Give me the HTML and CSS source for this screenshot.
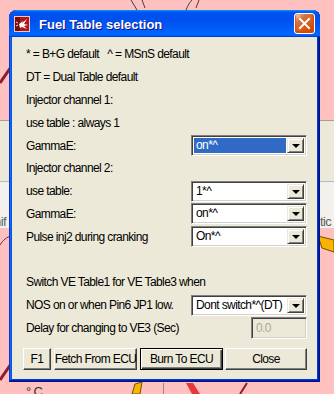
FILE: index.html
```html
<!DOCTYPE html>
<html>
<head>
<meta charset="utf-8">
<link rel="stylesheet" href="styles.css">
</head>
<body>
<div class="desktop">
  <svg class="backdrop" width="334" height="394" viewBox="0 0 334 394">
    <rect x="0" y="0" width="334" height="394" fill="#ffc0c0"/>
    <path d="M131 0 L137 10 M142 0 L145 8 M186 10 C188 5 190 2 192 0 M196 8 L199 0" stroke="#404040" stroke-width="1" fill="none"/>
    <path d="M0 83 L11 67" stroke="#8c1c2c" stroke-width="3" fill="none"/>
    <rect x="0" y="120" width="334" height="62" fill="#ece9d8"/>
    <rect x="0" y="182" width="334" height="46" fill="#f2f1ec"/>
    <line x1="0" y1="120.5" x2="334" y2="120.5" stroke="#a0a0a0"/>
    <line x1="0" y1="181.5" x2="334" y2="181.5" stroke="#b8b8b8"/>
    <text x="-6" y="226" font-family="Liberation Sans" font-size="13" fill="#606060">nif</text>
    <text x="320" y="226" font-family="Liberation Sans" font-size="13" fill="#606060">tic</text>
    <path d="M0 245 C3 240 7 237 11 236" stroke="#8c1c2c" stroke-width="1" fill="none"/>
    <path d="M318 236 L334 240 L334 252 L322 248 Z" fill="#f8b400" stroke="#705000" stroke-width="1"/>
    <path d="M0 380 L11 364" stroke="#8c1c2c" stroke-width="3" fill="none"/>
    <text x="26" y="396" font-family="Liberation Sans" font-size="13" fill="#303030">° C</text>
    <path d="M132 394 L135 384 L142 382 L140 394 Z" fill="#f8b400" stroke="#705000" stroke-width="1"/>
    <line x1="163.5" y1="383" x2="163.5" y2="394" stroke="#909090"/>
    <path d="M186 383 L193 383 L200 394 L192 394 Z" fill="#e83838"/>
    <path d="M247 383 L240 394" stroke="#8c1c2c" stroke-width="2" fill="none"/>
  </svg>

  <div class="window">
    <div class="titlebar">
      <svg class="appicon" width="16" height="16" viewBox="0 0 16 16">
        <rect x="0" y="0" width="16" height="16" fill="#b01818"/>
        <rect x="0" y="0" width="6" height="16" fill="#7a0c0c"/>
        <rect x="0.5" y="0.5" width="15" height="15" fill="none" stroke="#e8c8c8" stroke-width="1"/>
        <path d="M5 8 L9 5 L8 7 L13 3 L10 8 L14 9 L10 10 L13 13 L8 11 L6 12 Z" fill="#ffffff"/>
        <path d="M2 6 L4 7 M2 10 L4 9" stroke="#ffd0d0" stroke-width="1"/>
      </svg>
      <span class="title">Fuel Table selection</span>
      <div class="closebtn">
        <svg width="13" height="13" viewBox="0 0 13 13">
          <path d="M2 2 L11 11 M11 2 L2 11" stroke="#ffffff" stroke-width="2" stroke-linecap="square"/>
        </svg>
      </div>
    </div>
    <div class="body">
      <div class="rows">
        <div class="row"><span class="lbl">* = B+G default   ^ = MSnS default</span></div>
        <div class="row"><span class="lbl">DT = Dual Table default</span></div>
        <div class="row"><span class="lbl">Injector channel 1:</span></div>
        <div class="row"><span class="lbl">use table : always 1</span></div>
        <div class="row"><span class="lbl">GammaE:</span>
          <div class="combo"><span class="val selected">on*^</span><span class="dd"><span class="tri"></span></span></div>
        </div>
        <div class="row"><span class="lbl">Injector channel 2:</span></div>
        <div class="row"><span class="lbl">use table:</span>
          <div class="combo"><span class="val">1*^</span><span class="dd"><span class="tri"></span></span></div>
        </div>
        <div class="row"><span class="lbl">GammaE:</span>
          <div class="combo"><span class="val">on*^</span><span class="dd"><span class="tri"></span></span></div>
        </div>
        <div class="row"><span class="lbl">Pulse inj2 during cranking</span>
          <div class="combo"><span class="val">On*^</span><span class="dd"><span class="tri"></span></span></div>
        </div>
        <div class="row"></div>
        <div class="row"><span class="lbl">Switch VE Table1 for VE Table3 when</span></div>
        <div class="row"><span class="lbl">NOS on or when Pin6 JP1 low.</span>
          <div class="combo"><span class="val">Dont switch*^(DT)</span><span class="dd"><span class="tri"></span></span></div>
        </div>
        <div class="row"><span class="lbl">Delay for changing to VE3 (Sec)</span>
          <div class="field">0.0</div>
        </div>
      </div>
      <div class="buttons">
        <div class="btn b-f1">F1</div>
        <div class="btn b-fetch">Fetch From ECU</div>
        <div class="btn b-burn default">Burn To ECU</div>
        <div class="btn b-close">Close</div>
      </div>
    </div>
  </div>
</div>
</body>
</html>
```

FILE: styles.css
```css
html, body {
  margin: 0;
  padding: 0;
  width: 334px;
  height: 394px;
  overflow: hidden;
}

.desktop {
  position: relative;
  width: 334px;
  height: 394px;
  overflow: hidden;
  font-family: "Liberation Sans", Arial, sans-serif;
  font-size: 12px;
  letter-spacing: -0.6px;
  color: #000;
}

.backdrop {
  position: absolute;
  left: 0;
  top: 0;
  display: block;
}

.window {
  position: absolute;
  left: 9px;
  top: 10px;
  width: 311px;
  height: 372px;
  box-sizing: border-box;
  padding: 0 3px 3px 3px;
  display: flex;
  flex-direction: column;
  background: #0831d9;
  border-radius: 8px 8px 0 0;
  box-shadow: inset -1px -1px #00138c, inset 1px 1px #0831d9, inset -2px -2px #001ea0, inset 2px 2px #166aee, inset -3px -3px #003bda, inset 3px 3px #0855dd;
}

.titlebar {
  height: 27px;
  margin: 0 -3px;
  display: flex;
  align-items: center;
  padding: 0 5px 0 5px;
  border-radius: 8px 7px 0 0;
  background: linear-gradient(180deg, #0997ff, #0053ee 8%, #0050ee 40%, #0066ff 88%, #0066ff 93%, #005bff 95%, #003dd7 96%, #003dd7);
}

.appicon {
  display: block;
  flex: none;
  margin-top: 1px;
}

.title {
  flex: 1;
  margin-left: 9px;
  font-family: "Liberation Sans", Arial, sans-serif;
  font-weight: bold;
  font-size: 13px;
  letter-spacing: 0;
  color: #fff;
  text-shadow: 1px 1px #0f1089;
  padding-top: 2px;
}

.closebtn {
  width: 21px;
  height: 21px;
  box-sizing: border-box;
  border: 1px solid #fff;
  border-radius: 3px;
  background: radial-gradient(circle at 90% 90%, #cc4600 0%, #dc6527 55%, #cd7546 70%, #ffccb2 90%, #fff 100%);
  box-shadow: inset 0 -1px 2px 1px #da4600;
  display: flex;
  align-items: center;
  justify-content: center;
}

.closebtn svg {
  display: block;
}

.body {
  flex: 1;
  background: #ece9d8;
  padding: 6px 10px 0 11px;
  display: flex;
  flex-direction: column;
}

.rows {
  display: grid;
  grid-auto-rows: 22.8px;
}

.row {
  display: grid;
  grid-template-columns: minmax(0, 1fr) auto;
  align-items: center;
}

.lbl {
  padding-left: 3px;
  white-space: pre;
}

.combo {
  width: 116px;
  height: 21px;
  box-sizing: border-box;
  background: #fff;
  border: 1px solid;
  border-color: #808080 #fff #fff #808080;
  box-shadow: inset 1px 1px #404040, inset -1px -1px #d4d0c8;
  padding: 2px;
  display: flex;
}

.val {
  flex: 1;
  padding-left: 2px;
  line-height: 15px;
  white-space: nowrap;
  overflow: hidden;
  margin-right: 1px;
}

.val.selected {
  background: #316ac5;
  color: #fff;
}

.dd {
  flex: none;
  width: 17px;
  box-sizing: border-box;
  background: #ece9d8;
  border: 1px solid;
  border-color: #ece9d8 #404040 #404040 #ece9d8;
  box-shadow: inset 1px 1px #fff, inset -1px -1px #808080;
  display: flex;
  align-items: center;
  justify-content: center;
}

.tri {
  width: 0;
  height: 0;
  border-left: 4px solid transparent;
  border-right: 4px solid transparent;
  border-top: 4px solid #000;
  margin-top: 1px;
}

.field {
  justify-self: end;
  width: 56px;
  height: 22px;
  box-sizing: border-box;
  background: #ece9d8;
  border: 1px solid;
  border-color: #808080 #fff #fff #808080;
  box-shadow: inset 1px 1px #404040, inset -1px -1px #d4d0c8;
  color: #aca899;
  padding-left: 4px;
  line-height: 20px;
}

.buttons {
  display: flex;
  margin-top: 9px;
}

.btn {
  height: 22px;
  box-sizing: border-box;
  background: #ece9d8;
  border: 1px solid;
  border-color: #fff #404040 #404040 #fff;
  box-shadow: inset -1px -1px #808080;
  display: flex;
  align-items: center;
  justify-content: center;
  white-space: nowrap;
}

.btn.default {
  border-color: #000;
  box-shadow: inset 1px 1px #fff, inset -1px -1px #404040, inset -2px -2px #808080;
}

.b-f1 { width: 28px; }
.b-fetch { width: 83px; margin-left: 3px; }
.b-burn { width: 83px; margin-left: 3px; }
.b-close { width: 82px; margin-left: 2px; }
```
